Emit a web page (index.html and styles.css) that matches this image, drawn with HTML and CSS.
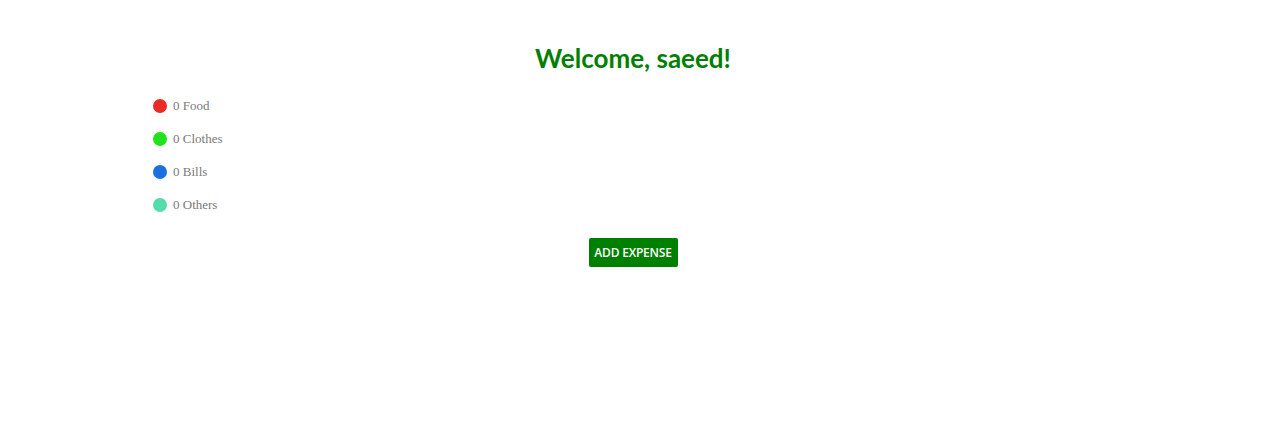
FILE: index.html
```html
<!DOCTYPE html>
<html>
<head>
<meta charset="utf-8">
<link rel="stylesheet" href="styles.css">
</head>
<body>
<div class="page">
  <h1 class="title">Welcome, saeed!</h1>
  <ul class="legend">
    <li class="legend-item"><span class="dot dot-food"></span><span class="label">0 Food</span></li>
    <li class="legend-item"><span class="dot dot-clothes"></span><span class="label">0 Clothes</span></li>
    <li class="legend-item"><span class="dot dot-bills"></span><span class="label">0 Bills</span></li>
    <li class="legend-item"><span class="dot dot-others"></span><span class="label">0 Others</span></li>
  </ul>
  <div class="actions">
    <button class="add-btn">ADD EXPENSE</button>
  </div>
</div>
</body>
</html>
```

FILE: styles.css
```css
html, body {
  margin: 0;
  padding: 0;
  background: #ffffff;
}
.page {
  padding-top: 40px;
}
.title {
  margin: 0;
  text-align: center;
  font-family: "Lato", "Open Sans", sans-serif;
  font-weight: 700;
  font-size: 26px;
  line-height: 36px;
  color: #008000;
}
.legend {
  list-style: none;
  margin: 0;
  padding: 13px 0 0 153px;
  display: flex;
  flex-direction: column;
}
.legend-item {
  display: flex;
  align-items: center;
  gap: 6px;
  height: 33px;
}
.dot {
  width: 14px;
  height: 14px;
  border-radius: 50%;
  flex: none;
}
.dot-food { background: #ea2a23; }
.dot-clothes { background: #23e21d; }
.dot-bills { background: #1c6fe0; }
.dot-others { background: #56dcab; }
.label {
  font-family: "Liberation Serif", "Times New Roman", serif;
  font-size: 13px;
  color: #7a7a7a;
}
.actions {
  display: flex;
  justify-content: center;
  padding-top: 17px;
}
.add-btn {
  border: none;
  border-radius: 2px;
  background: #008000;
  color: #ffffff;
  font-family: "Open Sans", "Noto Sans", sans-serif;
  font-weight: 600;
  font-size: 12px;
  height: 29px;
  width: 89px;
  padding: 0;
  letter-spacing: -0.2px;
  cursor: pointer;
}
```
